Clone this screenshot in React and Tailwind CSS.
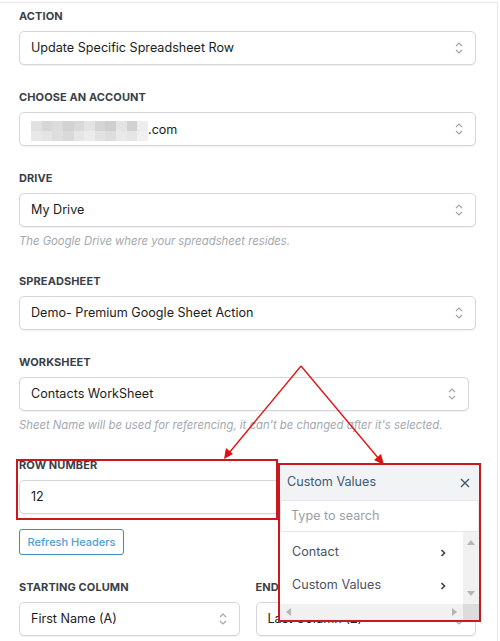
import React from "react";

const Chevrons = () => (
  <svg width="8" height="14" viewBox="0 0 8 14" className="shrink-0">
    <path d="M1 5 L4 2 L7 5" fill="none" stroke="#a1a6ae" strokeWidth="1.2" />
    <path d="M1 9 L4 12 L7 9" fill="none" stroke="#a1a6ae" strokeWidth="1.2" />
  </svg>
);

const Select = ({ children, className = "" }) => (
  <div
    className={
      "h-[34px] rounded-[5px] border border-[#d4d6db] bg-white shadow-[0_1px_1px_rgba(0,0,0,0.06)] flex items-center pl-[11px] pr-[12px] " +
      className
    }
  >
    <div className="flex-1 text-[12.6px] text-[#1a1d21] truncate">{children}</div>
    <Chevrons />
  </div>
);

const Label = ({ children }) => (
  <div className="text-[11px] leading-[14px] font-bold text-[#3a3f48] uppercase tracking-[0.1px] mb-2 whitespace-nowrap">
    {children}
  </div>
);

const Help = ({ children }) => (
  <div className="mt-[7px] text-[11.3px] leading-[15px] italic text-[#a3a8b0] whitespace-nowrap">{children}</div>
);

const row1 = [
  "bg-[#e1e1e1]", "bg-[#d7d7d7]", "bg-[#dcdcdc]", "bg-[#d2d2d2]", "bg-[#d9d9d9]", "bg-[#e3e3e3]",
  "bg-[#d5d5d5]", "bg-[#cfcfcf]", "bg-[#e4e4e4]", "bg-[#d1d1d1]", "bg-[#ededed]",
];
const row2 = [
  "bg-[#e8e8e8]", "bg-[#e4e4e4]", "bg-[#dedede]", "bg-[#d9d9d9]", "bg-[#e6e6e6]", "bg-[#ececec]",
  "bg-[#e2e2e2]", "bg-[#dddddd]", "bg-[#e9e9e9]", "bg-[#e5e5e5]", "bg-[#f0f0f0]",
];

const Blur = () => (
  <span className="inline-flex flex-col align-middle w-[117px] h-[20px]">
    <span className="flex h-[10px]">
      {row1.map((c, i) => (
        <span key={i} className={"flex-1 " + c} />
      ))}
    </span>
    <span className="flex h-[10px]">
      {row2.map((c, i) => (
        <span key={i} className={"flex-1 " + c} />
      ))}
    </span>
  </span>
);

const Caret = () => (
  <svg width="8" height="10" viewBox="0 0 8 10">
    <path d="M2.5 2 L5.5 5 L2.5 8" fill="none" stroke="#374151" strokeWidth="1.6" />
  </svg>
);

export default function App() {
  return (
    <div className="relative w-[500px] h-[641px] overflow-hidden bg-white font-[Inter,sans-serif]">
      <div className="mt-[2px] w-[498px] h-[700px] border-t border-r border-[#e6e8eb] pl-[19px] pr-[21px] pt-[6px]">
        <div className="flex flex-col gap-[25px]">
          <div>
            <Label>Action</Label>
            <Select>Update Specific Spreadsheet Row</Select>
          </div>
          <div>
            <Label>Choose an account</Label>
            <Select>
              <span className="inline-flex items-center">
                <Blur />
                <span>.com</span>
              </span>
            </Select>
          </div>
          <div>
            <Label>Drive</Label>
            <Select>My Drive</Select>
            <Help>The Google Drive where your spreadsheet resides.</Help>
          </div>
          <div>
            <Label>Spreadsheet</Label>
            <Select>Demo- Premium Google Sheet Action</Select>
          </div>
          <div>
            <Label>Worksheet</Label>
            <Select className="mr-[7px]">Contacts WorkSheet</Select>
            <Help>Sheet Name will be used for referencing, it can't be changed after it's selected.</Help>
          </div>
          <div>
            <Label>Row Number</Label>
            <div className="h-[34px] rounded-[5px] border border-[#d4d6db] bg-white shadow-[0_1px_1px_rgba(0,0,0,0.06)] flex items-center pl-[11px] text-[12.6px] text-[#1a1d21]">
              12
            </div>
            <div className="mt-[15px] flex">
              <button className="h-[26px] w-[105px] rounded-[3px] border border-[#3f8db5] text-[11px] font-medium text-[#4a9fd6] bg-white">
                Refresh Headers
              </button>
            </div>
          </div>
          <div className="grid grid-cols-2 gap-4">
            <div>
              <Label>Starting Column</Label>
              <Select>First Name (A)</Select>
            </div>
            <div>
              <Label>Ending Column</Label>
              <Select>Last Column (Z)</Select>
            </div>
          </div>
        </div>
      </div>

      {/* Red highlight around Row Number */}
      <div className="absolute left-[16px] top-[459px] w-[262px] h-[61px] border-2 border-[#c8191f] pointer-events-none" />

      {/* Custom values popup */}
      <div className="absolute left-[278px] top-[463px] w-[203px] h-[159px] border-2 border-[#c8191f] bg-[#f1f3f5] flex flex-col">
        <div className="h-[35px] flex items-center justify-between pl-[7px] pr-[9px]">
          <span className="text-[12.6px] text-[#3d5a73]">Custom Values</span>
          <svg width="10" height="10" viewBox="0 0 10 10">
            <path d="M1 1 L9 9 M9 1 L1 9" stroke="#3d5a73" strokeWidth="1.4" />
          </svg>
        </div>
        <div className="h-[32px] bg-white rounded-[3px] border border-[#e5e7eb] flex items-center pl-[10px] text-[12.6px] text-[#9aa0a8]">
          Type to search
        </div>
        <div className="flex-1 flex bg-white">
          <div className="flex-1 flex flex-col pt-[4px]">
            <div className="h-[33px] flex items-center justify-between pl-[12px] pr-[16px] text-[12.6px] text-[#4b5260]">
              <span>Contact</span>
              <Caret />
            </div>
            <div className="h-[33px] flex items-center justify-between pl-[12px] pr-[16px] text-[12.6px] text-[#4b5260]">
              <span>Custom Values</span>
              <Caret />
            </div>
          </div>
          <div className="w-[16px] bg-[#f1f1f1] flex flex-col items-center justify-between py-[8px]">
            <svg width="8" height="5" viewBox="0 0 8 5"><path d="M0 5 L4 0 L8 5 Z" fill="#b5b5b5" /></svg>
            <svg width="8" height="5" viewBox="0 0 8 5"><path d="M0 0 L4 5 L8 0 Z" fill="#b5b5b5" /></svg>
          </div>
        </div>
        <div className="h-[16px] flex bg-[#f1f1f1]">
          <div className="flex-1 flex items-center justify-between px-[6px]">
            <svg width="5" height="8" viewBox="0 0 5 8"><path d="M5 0 L0 4 L5 8 Z" fill="#b5b5b5" /></svg>
            <svg width="5" height="8" viewBox="0 0 5 8"><path d="M0 0 L5 4 L0 8 Z" fill="#b5b5b5" /></svg>
          </div>
          <div className="w-[16px] bg-[#dcdcdc]" />
        </div>
      </div>

      {/* Arrows */}
      <svg className="absolute left-0 top-0 pointer-events-none" width="500" height="641" viewBox="0 0 500 641">
        <line x1="301" y1="366" x2="229" y2="453" stroke="#e01010" strokeWidth="1.3" />
        <path d="M224 459 L226 448 L233 454 Z" fill="#e01010" />
        <line x1="301" y1="366" x2="379" y2="459" stroke="#e01010" strokeWidth="1.3" />
        <path d="M384 465 L374 460 L381 454 Z" fill="#e01010" />
      </svg>
    </div>
  );
}
